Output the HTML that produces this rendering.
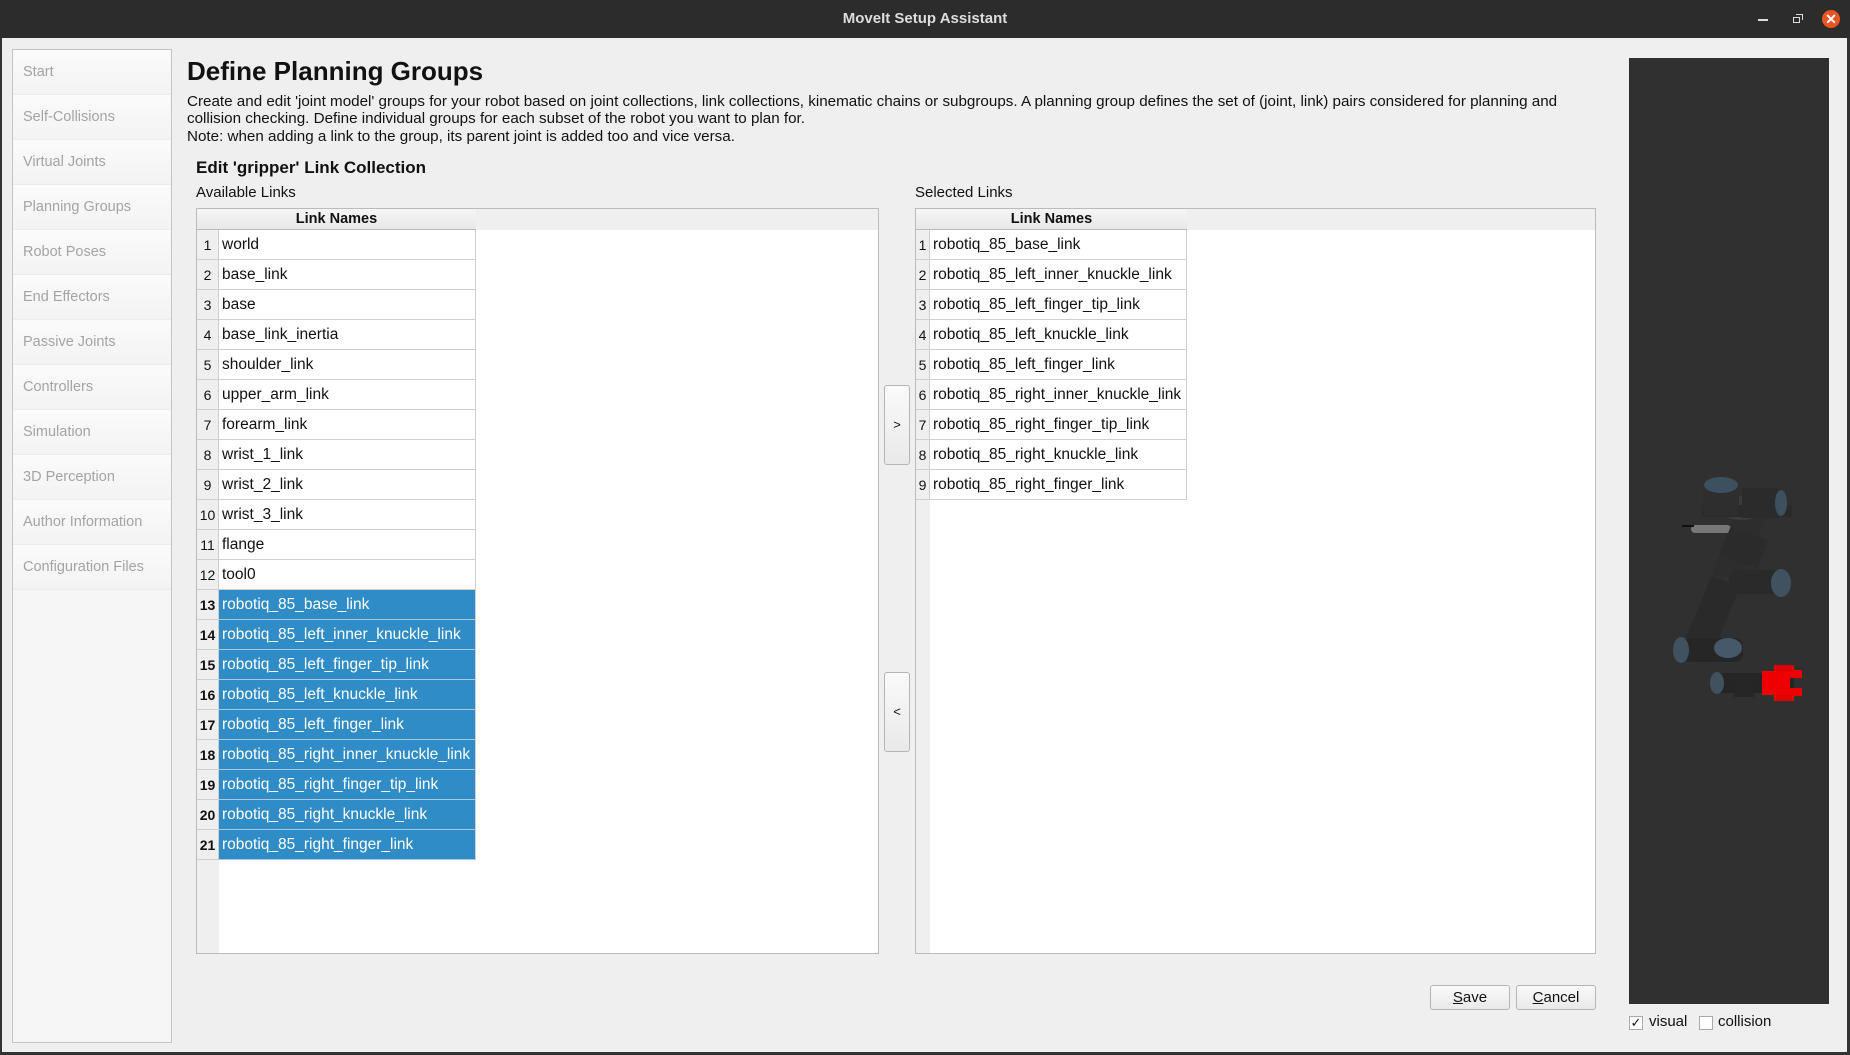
<!DOCTYPE html>
<html><head><meta charset="utf-8"><style>
*{box-sizing:border-box;margin:0;padding:0}
body{width:1850px;height:1055px;background:#efefef;font-family:"Liberation Sans",sans-serif;position:relative;overflow:hidden;color:#111}
.a{position:absolute}
#tb{left:0;top:0;width:1850px;height:38px;background:#2c2c2c;color:#ddd;font-weight:bold;font-size:15px;text-align:center;line-height:38px}
#win{left:0;top:38px;width:1850px;height:1017px;background:#efefef;border-left:2px solid #333;border-right:3px solid #333;border-bottom:3px solid #333}
#side{left:12px;top:49px;width:160px;height:994px;background:#f6f6f6;border:1px solid #c4c4c4}
#side div{height:45px;line-height:45px;padding-left:10px;font-size:14.5px;color:#a4a4a4;border-bottom:1px solid #ececec;background:linear-gradient(#fbfbfb,#f3f3f3)}
.tbl{top:208px;height:746px;background:#fff;border:1px solid #bbb}
.hdr{left:0;top:0;height:21px;background:linear-gradient(#f6f6f6,#e8e8e8);border-bottom:1px solid #bbb;font-weight:bold;font-size:14.5px;text-align:center;line-height:21px}
.hdrr{top:0;height:21px;background:#efefef;right:0}
.numc{left:0;top:21px;bottom:0;background:#efefef}
.row{left:0;height:30px;font-size:15.5px;line-height:29px}
.row .n{position:absolute;left:0;top:0;height:30px;background:#efefef;border-right:1px solid #cfcfcf;border-bottom:1px solid #cfcfcf;text-align:center;font-size:14px;padding-top:1px}
.row .t{position:absolute;top:0;height:30px;padding-left:3px;border-right:1px solid #cfcfcf;border-bottom:1px solid #cfcfcf;background:#fff}
.sel .t{background:#308cc6;color:#fff;border-bottom-color:#a9c9e0}
.sel .n{font-weight:bold}
.btn{background:linear-gradient(#fafafa,#e9e9e9);border:1px solid #b5b5b5;border-radius:3px;font-size:15px;text-align:center}
</style></head><body>
<div id="tb" class="a">MoveIt Setup Assistant</div>
<div class="a" style="left:1758px;top:19px;width:10px;height:2px;background:#ddd"></div>
<div class="a" style="left:1793px;top:17px;width:7px;height:6px;border:1.5px solid #ddd"></div>
<div class="a" style="left:1796px;top:14px;width:7px;height:6px;border-top:1.5px solid #ddd;border-right:1.5px solid #ddd"></div>
<div class="a" style="left:1822px;top:10px;width:18px;height:18px;border-radius:50%;background:#e95420;color:#fff;font-size:14px;line-height:18px;text-align:center;font-weight:bold">✕</div>
<div id="win" class="a"></div>
<div id="side" class="a">
<div>Start</div><div>Self-Collisions</div><div>Virtual Joints</div><div>Planning Groups</div><div>Robot Poses</div><div>End Effectors</div><div>Passive Joints</div><div>Controllers</div><div>Simulation</div><div>3D Perception</div><div>Author Information</div><div>Configuration Files</div>
</div>
<div class="a" style="left:187px;top:56px;font-size:26px;font-weight:bold">Define Planning Groups</div>
<div class="a" style="left:187px;top:93px;font-size:15.2px;line-height:17.3px;width:1410px">Create and edit 'joint model' groups for your robot based on joint collections, link collections, kinematic chains or subgroups. A planning group defines the set of (joint, link) pairs considered for planning and collision checking. Define individual groups for each subset of the robot you want to plan for.<br>Note: when adding a link to the group, its parent joint is added too and vice versa.</div>
<div class="a" style="left:196px;top:158px;font-size:17px;font-weight:bold">Edit 'gripper' Link Collection</div>
<div class="a" style="left:196px;top:184px;font-size:15px">Available Links</div>
<div class="a" style="left:915px;top:184px;font-size:15px">Selected Links</div>

<div class="a tbl" style="left:196px;width:683px">
<div class="a hdrr" style="left:279px"></div>
<div class="a hdr" style="width:279px">Link Names</div>
<div class="a numc" style="width:22px"></div>
<div id="L"></div>
</div>
<div class="a tbl" style="left:915px;width:681px">
<div class="a hdrr" style="left:271px"></div>
<div class="a hdr" style="width:271px">Link Names</div>
<div class="a numc" style="width:14px"></div>
<div id="R"></div>
</div>

<div class="a btn" style="left:884px;top:385px;width:26px;height:80px;line-height:78px;font-size:13px">&gt;</div>
<div class="a btn" style="left:884px;top:672px;width:26px;height:80px;line-height:78px;font-size:13px">&lt;</div>

<div class="a btn" style="left:1430px;top:985px;width:80px;height:25px;line-height:23px"><u>S</u>ave</div>
<div class="a btn" style="left:1516px;top:985px;width:80px;height:25px;line-height:23px"><u>C</u>ancel</div>

<div class="a" style="left:1629px;top:58px;width:200px;height:946px;background:#303030"></div>
<svg class="a" style="left:1629px;top:58px" width="200" height="946">
<g stroke="none" transform="translate(-30,75)">
<path d="M112 444 l26 -70 l30 8 l-24 62z" fill="#2d2d2d"/>
<path d="M112 444 l-25 60 l30 8 l25 -60z" fill="#2a2a2a"/>
<ellipse cx="143" cy="375" rx="23" ry="12" fill="#3b3b3b"/>
<rect x="130" y="437" width="58" height="24" rx="8" fill="#2a2a2a"/>
<ellipse cx="182" cy="450" rx="10" ry="14" fill="#40525f"/>
<rect x="84" y="505" width="60" height="24" rx="8" fill="#262626"/>
<ellipse cx="82" cy="517" rx="8" ry="13" fill="#40525f"/>
<ellipse cx="129" cy="515" rx="14" ry="10" fill="#45596a"/>
<rect x="115" y="540" width="80" height="20" fill="#252525"/>
<ellipse cx="118" cy="550" rx="7" ry="11" fill="#40525f"/>
<rect x="135" y="540" width="20" height="24" fill="#262626"/>
<rect x="103" y="372" width="90" height="12" fill="#2a2a2a"/>
<rect x="92" y="392" width="40" height="8" rx="4" fill="#777"/>
<rect x="83" y="392" width="12" height="2" fill="#111"/>
<rect x="104" y="349" width="36" height="34" rx="6" fill="#2e2e2e"/>
<ellipse cx="122" cy="352" rx="17" ry="8" fill="#3d5060"/>
<rect x="143" y="355" width="38" height="30" fill="#2b2b2b"/>
<ellipse cx="182" cy="370" rx="6" ry="13" fill="#3d5060"/>
<rect x="125" y="400" width="40" height="30" fill="#2b2b2b" transform="rotate(20 145 415)"/>
<rect x="163" y="538" width="20" height="24" fill="#e00"/>
<path d="M178 537 h25 v8 h-12 v10 h12 v8 h-25z" fill="#e00"/>
<rect x="175" y="532" width="20" height="6" fill="#d00"/>
<rect x="175" y="562" width="20" height="6" fill="#d00"/>
</g></svg>
<div class="a" style="left:1629px;top:1016px;width:14px;height:14px;border:1px solid #aaa;background:#fff;font-size:13px;line-height:12px;text-align:center">✓</div>
<div class="a" style="left:1649px;top:1013px;font-size:15px">visual</div>
<div class="a" style="left:1699px;top:1016px;width:14px;height:14px;border:1px solid #aaa;background:#fff"></div>
<div class="a" style="left:1718px;top:1013px;font-size:15px">collision</div>

<script>
var L=["world","base_link","base","base_link_inertia","shoulder_link","upper_arm_link","forearm_link","wrist_1_link","wrist_2_link","wrist_3_link","flange","tool0","robotiq_85_base_link","robotiq_85_left_inner_knuckle_link","robotiq_85_left_finger_tip_link","robotiq_85_left_knuckle_link","robotiq_85_left_finger_link","robotiq_85_right_inner_knuckle_link","robotiq_85_right_finger_tip_link","robotiq_85_right_knuckle_link","robotiq_85_right_finger_link"];
var R=L.slice(12);
function f(id,arr,nw,tw,selFrom){var h="";for(var i=0;i<arr.length;i++){var s=i>=selFrom?" sel":"";h+='<div class="a row'+s+'" style="top:'+(21+i*30)+'px;width:'+(nw+tw)+'px"><div class="n" style="width:'+nw+'px">'+(i+1)+'</div><div class="t" style="left:'+nw+'px;width:'+tw+'px">'+arr[i]+'</div></div>';}document.getElementById(id).innerHTML=h;}
f("L",L,22,257,12);f("R",R,14,257,99);
</script>
</body></html>
